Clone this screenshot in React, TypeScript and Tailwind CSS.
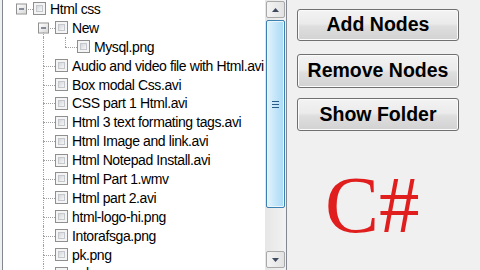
import React from "react";

type Row = { lvl: number; label: string; exp?: boolean; first?: boolean; last?: boolean };

const rows: Row[] = [
  { lvl: 0, label: "Html css", exp: true },
  { lvl: 1, label: "New", exp: true, first: true },
  { lvl: 2, label: "Mysql.png", last: true },
  { lvl: 1, label: "Audio and video file with Html.avi" },
  { lvl: 1, label: "Box modal Css.avi" },
  { lvl: 1, label: "CSS part 1 Html.avi" },
  { lvl: 1, label: "Html 3 text formating tags.avi" },
  { lvl: 1, label: "Html Image and link.avi" },
  { lvl: 1, label: "Html Notepad Install.avi" },
  { lvl: 1, label: "Html Part 1.wmv" },
  { lvl: 1, label: "Html part 2.avi" },
  { lvl: 1, label: "html-logo-hi.png" },
  { lvl: 1, label: "Intorafsga.png" },
  { lvl: 1, label: "pk.png" },
  { lvl: 1, label: "salman.png" },
];

function Expander() {
  return (
    <div className="absolute left-[6px] top-1/2 -translate-y-1/2 w-[11px] h-[11px] border border-[#919191] bg-gradient-to-br from-white to-[#d8d8d8] flex items-center justify-center">
      <div className="w-[5px] h-[1px] bg-[#1e2f4f]" />
    </div>
  );
}

function Cell({ top, bottom, h, exp }: { top?: boolean; bottom?: boolean; h?: boolean; exp?: boolean }) {
  return (
    <div className="relative h-full w-[22px] shrink-0">
      {top && <div className="absolute left-[11px] top-0 h-1/2 border-l border-dotted border-[#a0a0a0]" />}
      {bottom && <div className="absolute left-[11px] top-1/2 bottom-0 border-l border-dotted border-[#a0a0a0]" />}
      {h && <div className="absolute left-[11px] right-[-1px] top-1/2 border-t border-dotted border-[#a0a0a0]" />}
      {exp && <Expander />}
    </div>
  );
}

function CheckBox() {
  return (
    <div className="ml-[1px] w-[13px] h-[13px] shrink-0 border border-[#8f8f8f] bg-[#f4f4f4] p-[2px]">
      <div className="w-full h-full border border-[#c4c7cb] bg-gradient-to-br from-[#d4d6da] to-[#f7f7f7]" />
    </div>
  );
}

function TreeRow({ r }: { r: Row }) {
  const cells = [];
  for (let i = 0; i < r.lvl; i++) {
    cells.push(<Cell key={i} top={i >= 1} bottom={i >= 1} />);
  }
  let conn;
  if (r.lvl === 0) conn = <Cell key="c" h exp={r.exp} />;
  else conn = <Cell key="c" h exp={r.exp} top={!r.first} bottom={!r.last} />;
  return (
    <div className="h-[18.9px] flex items-center">
      {cells}
      {conn}
      <CheckBox />
      <span className="ml-[4px] whitespace-nowrap text-[14px] leading-none tracking-[-0.4px] text-black font-['Liberation_Sans',Arial,sans-serif]">
        {r.label}
      </span>
    </div>
  );
}

function ArrowBtn({ up }: { up?: boolean }) {
  return (
    <div className="h-[17px] mx-[1px] rounded-[2px] border border-[#a9a9a9] bg-gradient-to-r from-[#f4f4f4] to-[#e2e2e2] flex items-center justify-center">
      <svg width="7" height="4" viewBox="0 0 7 4">
        {up ? <path d="M0 4 L3.5 0 L7 4 Z" fill="#3d4a5e" /> : <path d="M0 0 L3.5 4 L7 0 Z" fill="#3d4a5e" />}
      </svg>
    </div>
  );
}

function Button({ label, h }: { label: string; h: string }) {
  return (
    <div
      className={`${h} w-[162px] rounded-[3px] border border-[#707070] bg-[linear-gradient(#f3f3f3,#ebebeb_45%,#dedede_55%,#d2d2d2)] shadow-[inset_0_0_0_1px_#fbfbfb] flex items-center justify-center text-[19.5px] font-bold text-black font-['Liberation_Sans',Arial,sans-serif]`}
    >
      {label}
    </div>
  );
}

export default function App() {
  return (
    <div className="w-[480px] h-[270px] bg-[#f0f0f0] flex overflow-hidden">
      <div className="ml-[2px] w-[285px] h-[270px] flex shrink-0 border-l border-r border-[#828790] bg-white">
        <div className="w-[262px] shrink-0 overflow-hidden pl-[7px] mt-[-0.5px]">
          {rows.map((r, i) => (
            <TreeRow key={i} r={r} />
          ))}
        </div>
        <div className="w-[21px] shrink-0 flex flex-col bg-gradient-to-r from-[#e6e6e6] to-[#f2f2f2] pt-[1px] pb-[2px]">
          <ArrowBtn up />
          <div className="mt-[2px] mx-[1px] h-[188px] rounded-[2px] border border-[#3c7fb1] bg-gradient-to-r from-[#e3f4fc] via-[#c4e6f9] to-[#a9daf6] shadow-[inset_0_0_0_1px_#eaf6fd] flex items-center justify-center">
            <div className="flex flex-col gap-[2px] mt-[-20px]">
              <div className="w-[7px] h-[1px] bg-[#2b5c85]" />
              <div className="w-[7px] h-[1px] bg-[#2b5c85]" />
              <div className="w-[7px] h-[1px] bg-[#2b5c85]" />
            </div>
          </div>
          <div className="flex-1" />
          <ArrowBtn />
        </div>
      </div>
      <div className="ml-[10px] flex flex-col">
        <div className="mt-[9px]">
          <Button label="Add Nodes" h="h-[32px]" />
        </div>
        <div className="mt-[13px]">
          <Button label="Remove Nodes" h="h-[34px]" />
        </div>
        <div className="mt-[10px]">
          <Button label="Show Folder" h="h-[33px]" />
        </div>
        <div className="mt-[34px] pl-[28px] text-[81px] leading-[81px] text-[#e01e1e] font-['Liberation_Serif','Times_New_Roman',serif]">
          C#
        </div>
      </div>
    </div>
  );
}
